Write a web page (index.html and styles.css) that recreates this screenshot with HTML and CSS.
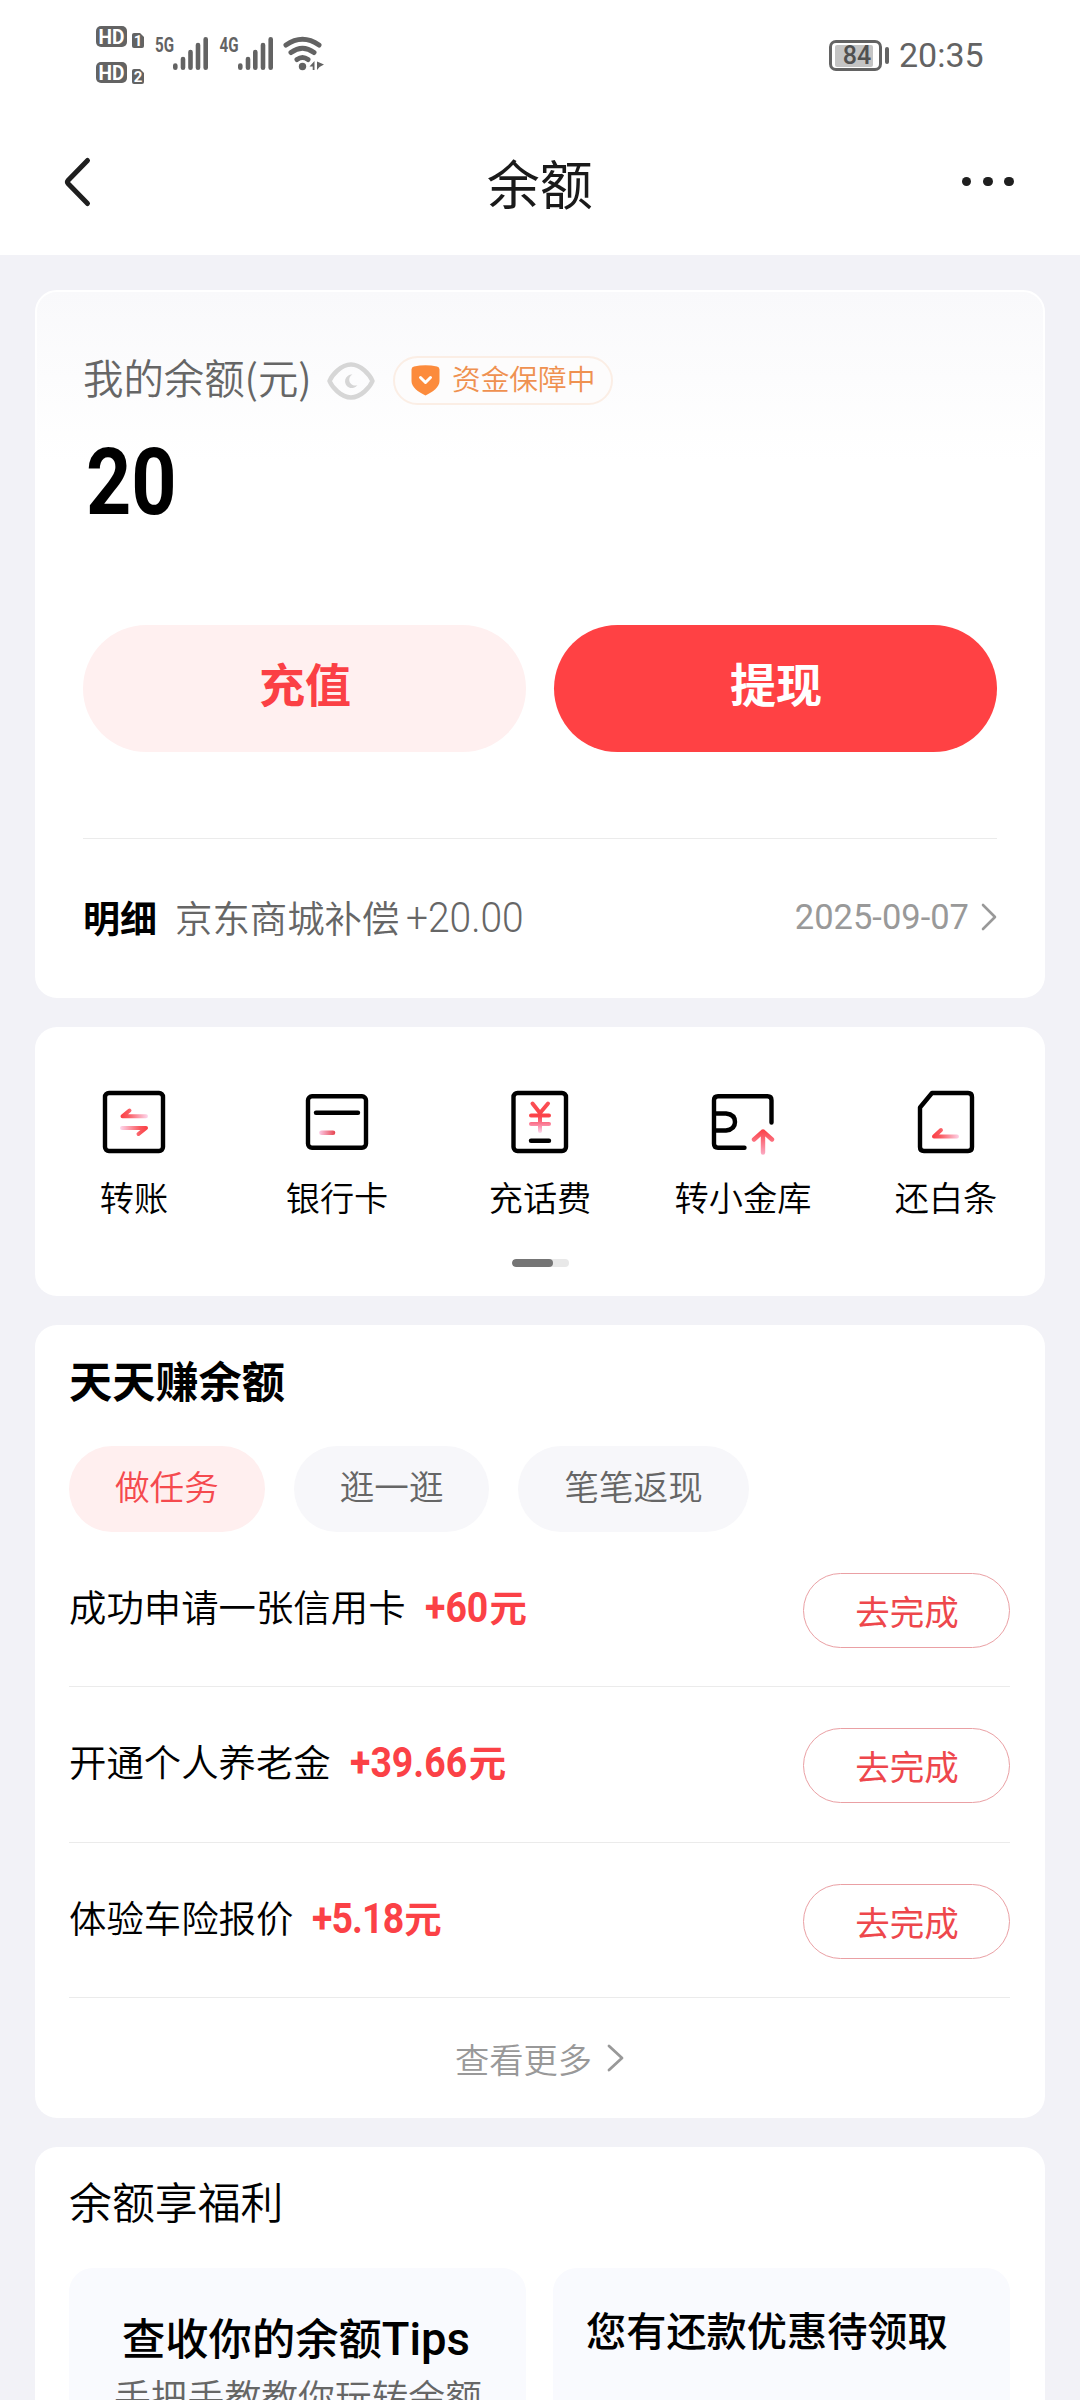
FILE: index.html
```html
<!DOCTYPE html>
<html lang="zh-CN">
<head>
<meta charset="utf-8">
<title>余额</title>
<link rel="stylesheet" href="styles.css">
</head>
<body>
<div class="page">
  <header class="top">
    <div class="status">
      <svg class="status-left" width="240" height="70" viewBox="90 20 240 70">
        <g fill="#636363">
          <rect x="96" y="26" width="31" height="21" rx="5"/>
          <rect x="96" y="62" width="31" height="21" rx="5"/>
          <path d="M134 33h6l4 4v9q0 2-2 2h-8q-2 0-2-2V35q0-2 2-2z"/>
          <path d="M134 69h6l4 4v9q0 2-2 2h-8q-2 0-2-2V71q0-2 2-2z"/>
        </g>
        <g class="badge-text" text-anchor="middle">
          <text x="111.5" y="43.5" font-size="19.500" textLength="26" lengthAdjust="spacingAndGlyphs">HD</text>
          <text x="111.5" y="79.5" font-size="19.500" textLength="26" lengthAdjust="spacingAndGlyphs">HD</text>
          <text x="138" y="46" font-size="15">1</text>
          <text x="138" y="82" font-size="15">2</text>
        </g>
        <g class="net-text">
          <text x="155" y="52" font-size="21" textLength="19" lengthAdjust="spacingAndGlyphs">5G</text>
          <text x="219.500" y="52" font-size="21" textLength="19" lengthAdjust="spacingAndGlyphs">4G</text>
        </g>
        <g stroke="#636363" stroke-width="4.600" stroke-linecap="round">
          <path d="M175.300 65.500V67.700M183 59V67.700M190.500 52V67.700M198 45V67.700M205.700 39.300V67.700"/>
          <path d="M240.300 65.500V67.700M248 59V67.700M255.300 52V67.700M263 45V67.700M270.700 39.300V67.700"/>
        </g>
        <g fill="none" stroke="#636363" stroke-width="5" stroke-linecap="round">
          <path d="M286 45Q302.500 33.500 319 45M291 52.500Q302.500 44 314 52.500M297 59.500Q302.500 55.500 308 59.500"/>
        </g>
        <circle cx="302.500" cy="66.500" r="3.700" fill="#636363"/>
        <path d="M309.500 66.500l5-5.500v9h-1.800v-3.500zM317 61.500l7 3-4.500 2.500-2.500 3z" fill="#636363"/>
      </svg>
      <div class="status-right">
        <div class="battery"><span class="battery-fill"></span><span class="battery-num">84</span></div>
        <span class="battery-tip"></span>
        <span class="clock">20:35</span>
      </div>
    </div>
    <nav class="nav">
      <svg class="back" width="32" height="54" viewBox="0 0 32 54"><path d="M25.500 5.500L6 25.500Q4.800 27 6 28.500L25.500 48.500" fill="none" stroke="#1f1f1f" stroke-width="5" stroke-linecap="round" stroke-linejoin="round"/></svg>
      <h1>余额</h1>
      <div class="more"><i></i><i></i><i></i></div>
    </nav>
  </header>

  <main class="cards">
    <section class="card balance">
      <div class="balance-head">
        <span class="balance-label">我的余额(元)</span>
        <svg class="eye" width="48" height="38" viewBox="0 0 48 38"><path d="M2.500 19C5 13 14 2.500 24 2.500S43 13 45.500 19C43 25 34 35.500 24 35.500S5 25 2.500 19Z" fill="none" stroke="#d6d6d6" stroke-width="4.500" stroke-linejoin="round"/><path d="M25.500 12.500a6.800 6.800 0 1 0 5 10.500A5.500 5.500 0 0 1 25.500 12.500Z" fill="#d6d6d6"/></svg>
        <div class="guard">
          <svg width="29" height="31" viewBox="0 0 29 31"><path d="M3 1.500Q14.500-.8 26 1.500Q28.500 2 28.500 4.500V16C28.500 22 22 27 14.500 30.500C7 27 .5 22 .5 16V4.500Q.5 2 3 1.500Z" fill="#fc8b3c"/><path d="M9.500 12.500l5 5 5-5" fill="none" stroke="#fff" stroke-width="3" stroke-linecap="round" stroke-linejoin="round"/></svg>
          <span>资金保障中</span>
        </div>
      </div>
      <div class="amount"><span>20</span></div>
      <div class="actions">
        <div class="btn soft">充值</div>
        <div class="btn solid">提现</div>
      </div>
      <div class="detail">
        <b>明细</b>
        <span class="detail-name">京东商城补偿</span>
        <span class="detail-sum"><span>+20.00</span></span>
        <span class="detail-date">2025-09-07</span>
        <svg class="arrow" width="16" height="28" viewBox="0 0 16 28"><path d="M2 2L14 14L2 26" fill="none" stroke="#999" stroke-width="2.600" stroke-linecap="round" stroke-linejoin="round"/></svg>
      </div>
    </section>

    <section class="card shortcuts">
      <svg class="defs" width="0" height="0">
        <defs>
          <linearGradient id="fadeRight" gradientUnits="userSpaceOnUse" x1="20" y1="0" x2="48" y2="0"><stop offset="0" stop-color="#fb3c42"/><stop offset=".3" stop-color="#fa5a60"/><stop offset="1" stop-color="#fdd8ee"/></linearGradient>
          <linearGradient id="fadeLeft" gradientUnits="userSpaceOnUse" x1="48" y1="0" x2="20" y2="0"><stop offset="0" stop-color="#fb3c42"/><stop offset=".3" stop-color="#fa5a60"/><stop offset="1" stop-color="#fdd8ee"/></linearGradient>
          <linearGradient id="dash" gradientUnits="userSpaceOnUse" x1="32" y1="0" x2="17" y2="0"><stop offset="0" stop-color="#e64550"/><stop offset="1" stop-color="#fbc4e0"/></linearGradient>
          <linearGradient id="fadeDown" gradientUnits="userSpaceOnUse" x1="0" y1="14" x2="0" y2="45"><stop offset="0" stop-color="#fb5055"/><stop offset=".45" stop-color="#fb4248"/><stop offset=".7" stop-color="#fb7892"/><stop offset="1" stop-color="#fdd8ee"/></linearGradient>
          <linearGradient id="fadeUp" gradientUnits="userSpaceOnUse" x1="0" y1="41" x2="0" y2="66"><stop offset="0" stop-color="#fb3c42"/><stop offset="1" stop-color="#fba8c0"/></linearGradient>
        </defs>
      </svg>
      <div class="grid">
        <div class="item">
          <svg width="68" height="68" viewBox="0 0 68 68" fill="none" stroke-linecap="round" stroke-linejoin="round"><rect x="5" y="5" width="58" height="58" rx="4" stroke="#000" stroke-width="4.400"/><g stroke-width="4"><path d="M46 28.300H22.500L29.500 22.500" stroke="url(#fadeRight)"/><path d="M22 40H46L38.500 46" stroke="url(#fadeLeft)"/></g></svg>
          <span>转账</span>
        </div>
        <div class="item">
          <svg width="68" height="68" viewBox="0 0 68 68" fill="none" stroke-linecap="round" stroke-linejoin="round"><rect x="5" y="8.300" width="58" height="51.500" rx="4" stroke="#000" stroke-width="4.400"/><path d="M13 24.700H55" stroke="#000" stroke-width="4.400"/><path d="M18.500 44.700h11.500" stroke="url(#dash)" stroke-width="4.600"/></svg>
          <span>银行卡</span>
        </div>
        <div class="item">
          <svg width="68" height="68" viewBox="0 0 68 68" fill="none" stroke-linecap="round" stroke-linejoin="round"><rect x="7.500" y="5" width="52.500" height="58" rx="4" stroke="#000" stroke-width="4.400"/><path d="M25 52.700H43" stroke="#000" stroke-width="4.400"/><path d="M26.500 15.500L34 25L42 15.500M25 27.500H43M25 36H43M34 25V43" stroke="url(#fadeDown)" stroke-width="4"/></svg>
          <span>充话费</span>
        </div>
        <div class="item">
          <svg width="68" height="68" viewBox="0 0 68 68" fill="none" stroke-linecap="round" stroke-linejoin="round"><path d="M62.500 34.500V12.300Q62.500 8.300 58.500 8.300H9Q5 8.300 5 12.300V55.800Q5 59.800 9 59.800H35.500M5 25.500H17Q26 26.500 26 34Q26 41.500 17 42.500H5" stroke="#000" stroke-width="4.400"/><path d="M45 51.500L54 43.500L63 51.500M54 43.500V64.500" stroke="url(#fadeUp)" stroke-width="4.400"/></svg>
          <span>转小金库</span>
        </div>
        <div class="item">
          <svg width="68" height="68" viewBox="0 0 68 68" fill="none" stroke-linecap="round" stroke-linejoin="round"><path d="M20 5H56Q60 5 60 9V59Q60 63 56 63H12Q8 63 8 59V19.500Z" stroke="#000" stroke-width="4.400"/><path d="M45 48.500H22L29 42" stroke="url(#fadeRight)" stroke-width="4"/></svg>
          <span>还白条</span>
        </div>
      </div>
      <div class="track"><span></span></div>
    </section>

    <section class="card earn">
      <h2>天天赚余额</h2>
      <div class="tabs">
        <span class="tab on">做任务</span>
        <span class="tab">逛一逛</span>
        <span class="tab">笔笔返现</span>
      </div>
      <div class="task">
        <span class="task-name">成功申请一张信用卡</span>
        <span class="reward"><span class="num two-digit">+60</span><span class="unit">元</span></span>
        <span class="go">去完成</span>
      </div>
      <div class="task">
        <span class="task-name">开通个人养老金</span>
        <span class="reward"><span class="num four-digit">+39.66</span><span class="unit">元</span></span>
        <span class="go">去完成</span>
      </div>
      <div class="task">
        <span class="task-name">体验车险报价</span>
        <span class="reward"><span class="num three-digit">+5.18</span><span class="unit">元</span></span>
        <span class="go">去完成</span>
      </div>
      <div class="view-more">
        <span>查看更多</span>
        <svg width="17" height="28" viewBox="0 0 17 28"><path d="M2 2L15 14L2 26" fill="none" stroke="#999" stroke-width="2.800" stroke-linecap="round" stroke-linejoin="round"/></svg>
      </div>
    </section>

    <section class="card perks">
      <h2>余额享福利</h2>
      <div class="perk-row">
        <div class="perk tips"><h3>查收你的余额<span>Tips</span></h3><p>手把手教教你玩转余额</p></div>
        <div class="perk offer"><h3>您有还款优惠待领取</h3></div>
      </div>
    </section>
  </main>
</div>
</body>
</html>
```
FILE: styles.css
```css
* { box-sizing: border-box; }
body {
  margin: 0;
  background: #f2f2f7;
  color: #000;
  font-family: "Noto Sans CJK SC", "Noto Sans", sans-serif;
  font-weight: 350;
}
h1, h2, h3, p { margin: 0; }
.page { width: 1080px; height: 2400px; overflow: hidden; }

/* status bar and navigation */
.top { height: 255px; background: #fff; }
.status { height: 110px; padding: 20px 97px 0 90px; display: flex; justify-content: space-between; align-items: flex-start; }
.badge-text { font-family: Roboto, sans-serif; font-weight: 700; fill: #fff; }
.net-text { font-family: Roboto, sans-serif; font-weight: 700; fill: #636363; }
.status-right { display: flex; align-items: center; height: 70px; font-family: Roboto, sans-serif; color: #636363; }
.battery { width: 53px; height: 31px; border: 3px solid #636363; border-radius: 7px; padding: 2px 3px; display: grid; }
.battery-fill { grid-area: 1 / 1; width: 38px; background: #c4c4c4; border-radius: 2px; }
.battery-num { grid-area: 1 / 1; font-size: 25px; line-height: 22px; font-weight: 500; text-align: center; padding-left: 3px; color: #505050; }
.battery-tip { width: 4px; height: 17px; margin: 0 10px 0 3px; border-radius: 2px; background: #636363; }
.clock { font-size: 34px; line-height: 40px; font-weight: 400; width: 84px; }
.nav { height: 143px; padding: 0 66px 0 62px; display: flex; justify-content: space-between; align-items: center; }
.back { margin-right: 24px; }
.nav h1 { font-size: 53px; line-height: 72px; font-weight: 400; color: #1a1a1a; }
.more { display: flex; gap: 11.500px; }
.more i { width: 9.800px; height: 9.800px; border-radius: 50%; background: #1f1f1f; }

/* cards */
.cards { padding: 35px 35px 0; display: flex; flex-direction: column; gap: 29px; }
.card { background: #fff; border-radius: 22px; flex: none; }

.balance { height: 708px; padding: 58px 46px 0; border: 2px solid #fff; background: linear-gradient(#f9f9fb 0, #fff 170px); }
.balance-head { height: 61px; display: flex; align-items: center; }
.balance-label { width: 244px; font-size: 40.400px; line-height: 60px; margin-top: -7px; color: #666; white-space: nowrap; }
.eye { margin-right: 18px; }
.guard { width: 220px; height: 49px; border: 2px solid #fbeee5; border-radius: 25px; padding-left: 16px; display: flex; align-items: center; gap: 12px; background: #fdfcfc; }
.guard span { font-size: 28.700px; line-height: 40px; color: #ef9150; margin-top: -6px; white-space: nowrap; }
.amount { height: 214px; padding-top: 18px; padding-left: 3px; }
.amount span { display: inline-block; font-family: Roboto, sans-serif; font-weight: 700; font-size: 93px; line-height: 108px; transform: scaleX(.85); transform-origin: 0 0; }
.actions { display: flex; gap: 28px; }
.btn { flex: 1; height: 127px; border-radius: 64px; text-align: center; font-size: 46px; line-height: 115px; font-weight: 700; padding-left: 1px; }
.soft { background: #fff0f0; color: #fb4045; }
.solid { background: #ff4144; color: #fff; }
.detail { margin-top: 86px; border-top: 1px solid #ebebeb; display: flex; align-items: center; height: 157px; color: #666; }
.detail b { font-size: 37px; font-weight: 700; color: #000; width: 92px; }
.detail-name { font-size: 37.400px; white-space: nowrap; }
.detail-sum { width: 200px; padding-left: 7px; font-family: Roboto, sans-serif; font-size: 43px; }
.detail-sum span { display: inline-block; line-height: 50px; transform: scaleX(.905); transform-origin: 0 0; margin-top: -8px; }
.detail-date { margin-left: auto; margin-right: 12px; font: 400 34.500px/40px Roboto, sans-serif; color: #999; }

.shortcuts { height: 269px; padding-top: 61px; position: relative; }
.defs { position: absolute; }
.grid { display: grid; grid-template-columns: repeat(5, 203px); justify-content: center; }
.item { display: flex; flex-direction: column; align-items: center; }
.item span { font-size: 34.200px; line-height: 50px; margin-top: 15px; white-space: nowrap; }
.track { width: 57px; height: 8px; border-radius: 4px; background: #e8e8e8; margin: 38px auto 0; overflow: hidden; }
.track span { display: block; width: 41px; height: 8px; border-radius: 4px; background: #757575; }

.earn { height: 793px; padding: 22px 35px 0 34px; }
.earn h2 { font-size: 43.200px; line-height: 64px; font-weight: 700; }
.tabs { margin-top: 35px; display: flex; gap: 29px; }
.tab { height: 86px; padding: 0 46px; border-radius: 43px; background: #f7f7fa; color: #666; font-size: 34.600px; line-height: 79px; }
.tab.on { background: #ffefef; color: #f54a4e; }
.task { display: flex; align-items: flex-start; height: 155.400px; border-bottom: 1px solid #ebebeb; padding-top: 41px; }
.task-name { font-size: 37.400px; line-height: 66px; white-space: nowrap; }
.reward { margin-left: 19px; display: flex; align-items: flex-start; color: #fb4146; font-weight: 700; }
.num { font-family: Roboto, sans-serif; font-size: 43px; line-height: 68px; transform: scaleX(.87); transform-origin: 0 0; white-space: nowrap; }
.two-digit { width: 65px; }
.three-digit { width: 92px; letter-spacing: -1px; }
.four-digit { width: 119px; }
.unit { font-size: 37.400px; line-height: 66px; }
.go { margin-left: auto; width: 207px; height: 75px; border: 1.500px solid #eaa0a4; border-radius: 38px; text-align: center; font-size: 34.500px; line-height: 72px; font-weight: 400; color: #ee474c; padding-left: 1px; }
.view-more { display: flex; align-items: center; justify-content: center; height: 120px; gap: 15px; font-size: 34.300px; color: #999; }

.perks { height: 400px; padding: 22px 35px 0 34px; }
.perks h2 { font-size: 42.900px; line-height: 62px; font-weight: 350; }
.perk-row { display: grid; grid-template-columns: 1fr 1fr; gap: 27px; margin-top: 37px; }
.perk { min-width: 0; height: 260px; border-radius: 24px; background: #f9fafe; }
.perk h3 { font-weight: 500; line-height: 60px; white-space: nowrap; }
.perk h3 span { font-family: Roboto, sans-serif; font-size: 1.05em; line-height: 1; }
.tips { padding: 38px 0 0 45px; }
.tips h3 { font-size: 43.300px; padding-left: 8px; }
.tips p { font-size: 36.800px; line-height: 54px; margin-top: 2px; color: #666; white-space: nowrap; }
.offer { padding: 31px 0 0 33px; }
.offer h3 { font-size: 40.200px; }
```
